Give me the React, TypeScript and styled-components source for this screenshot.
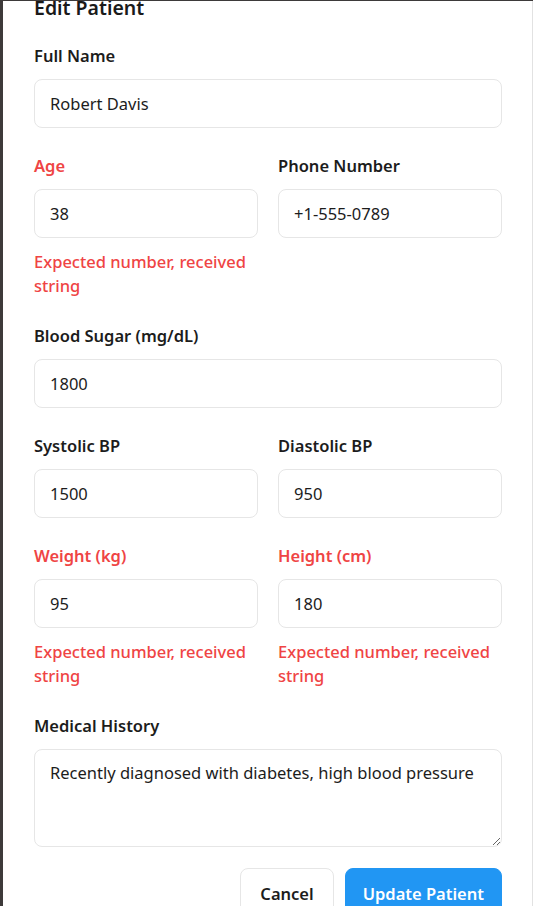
import React from "react";
import styled, { createGlobalStyle } from "styled-components";

const GlobalStyle = createGlobalStyle`
  html, body { margin: 0; padding: 0; }
  body {
    background: #3d3a3a;
    font-family: "Noto Sans", "Open Sans", sans-serif;
    color: #1c1c1c;
  }
  * { box-sizing: border-box; }
`;

const FS = "16.5px";

const Backdrop = styled.div`
  display: flex;
  height: 906px;
  padding: 1px 0 0 3px;
  overflow: hidden;
`;

const Modal = styled.div`
  flex: 1;
  background: #ffffff;
  border-right: 1px solid #e2e2e2;
  padding: 0 30px 0 31px;
  overflow: hidden;
`;

const Header = styled.div`
  display: flex;
  justify-content: space-between;
  align-items: flex-start;
  margin-top: -6px;
  height: 26px;
`;

const Title = styled.h2`
  margin: 0;
  font-size: 19.5px;
  line-height: 26px;
  font-weight: 600;
  color: #1a1a1a;
`;

const CloseButton = styled.button`
  border: none;
  background: none;
  padding: 0;
  margin: -7px -6px 0 0;
  width: 14px;
  height: 14px;
  color: #9a9a9a;
  display: flex;
`;

const Form = styled.form`
  display: flex;
  flex-direction: column;
  gap: 26px;
  margin-top: 23px;
`;

const Row = styled.div`
  display: grid;
  grid-template-columns: 1fr 1fr;
  column-gap: 20px;
  align-items: start;
`;

const Field = styled.div`
  display: flex;
  flex-direction: column;
  gap: 11px;
`;

const Label = styled.label<{ $error?: boolean }>`
  font-size: ${FS};
  line-height: 24px;
  font-weight: 600;
  color: ${(p) => (p.$error ? "#ef4444" : "#1c1c1c")};
`;

const Input = styled.input`
  height: 49px;
  width: 100%;
  border: 1px solid #e6e6e6;
  border-radius: 8px;
  padding: 0 15px;
  font-family: inherit;
  font-size: ${FS};
  color: #1c1c1c;
  background: #fff;
  outline: none;
`;

const TextArea = styled.textarea`
  height: 98px;
  width: 100%;
  border: 1px solid #e6e6e6;
  border-radius: 8px;
  padding: 11px 15px;
  font-family: inherit;
  font-size: ${FS};
  line-height: 24px;
  color: #1c1c1c;
  background: #fff;
  outline: none;
  display: block;
`;

const ErrorText = styled.div`
  margin-top: 1px;
  font-size: ${FS};
  line-height: 24px;
  font-weight: 500;
  color: #ef4444;
`;

const Actions = styled.div`
  display: flex;
  justify-content: flex-end;
  gap: 11px;
  margin-top: -5px;
`;

const Button = styled.button<{ $primary?: boolean }>`
  height: 50px;
  padding: 0 ${(p) => (p.$primary ? "17px" : "19px")};
  border-radius: 8px;
  font-family: inherit;
  font-size: ${FS};
  font-weight: 600;
  border: 1px solid ${(p) => (p.$primary ? "#2196f3" : "#e6e6e6")};
  background: ${(p) => (p.$primary ? "#2196f3" : "#ffffff")};
  color: ${(p) => (p.$primary ? "#ffffff" : "#1c1c1c")};
`;

type FieldProps = {
  label: string;
  value: string;
  error?: string;
};

const FormField: React.FC<FieldProps> = ({ label, value, error }) => (
  <Field>
    <Label $error={!!error}>{label}</Label>
    <Input defaultValue={value} />
    {error && <ErrorText>{error}</ErrorText>}
  </Field>
);

const ERR = "Expected number, received string";

export default function App() {
  return (
    <>
      <GlobalStyle />
      <Backdrop>
        <Modal>
          <Header>
            <Title>Edit Patient</Title>
            <CloseButton aria-label="Close">
              <svg width="14" height="14" viewBox="0 0 14 14" fill="none" stroke="currentColor" strokeWidth="1.5">
                <path d="M2 2l10 10M12 2L2 12" />
              </svg>
            </CloseButton>
          </Header>
          <Form onSubmit={(e) => e.preventDefault()}>
            <FormField label="Full Name" value="Robert Davis" />
            <Row>
              <FormField label="Age" value="38" error={ERR} />
              <FormField label="Phone Number" value="+1-555-0789" />
            </Row>
            <FormField label="Blood Sugar (mg/dL)" value="1800" />
            <Row>
              <FormField label="Systolic BP" value="1500" />
              <FormField label="Diastolic BP" value="950" />
            </Row>
            <Row>
              <FormField label="Weight (kg)" value="95" error={ERR} />
              <FormField label="Height (cm)" value="180" error={ERR} />
            </Row>
            <Field>
              <Label>Medical History</Label>
              <TextArea defaultValue="Recently diagnosed with diabetes, high blood pressure" />
            </Field>
            <Actions>
              <Button type="button">Cancel</Button>
              <Button type="submit" $primary>Update Patient</Button>
            </Actions>
          </Form>
        </Modal>
      </Backdrop>
    </>
  );
}
